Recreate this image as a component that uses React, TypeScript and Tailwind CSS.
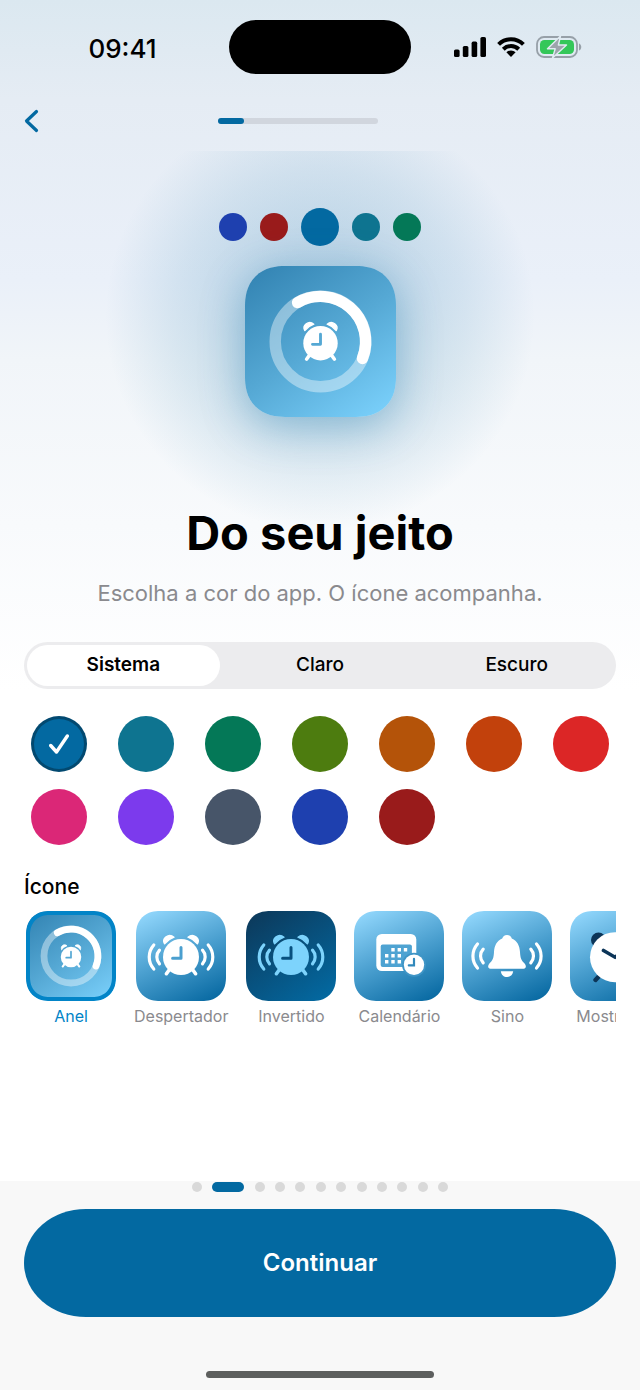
import { useState } from 'react'
import type { ReactNode } from 'react'

type IconName = 'Anel' | 'Despertador' | 'Invertido' | 'Calendário' | 'Sino' | 'Mostrador'

const modes = ['Sistema', 'Claro', 'Escuro']

const colors = [
  { name: 'Azul', bg: 'bg-[#0369a1]' },
  { name: 'Petróleo', bg: 'bg-[#0e7490]' },
  { name: 'Verde', bg: 'bg-[#047857]' },
  { name: 'Oliva', bg: 'bg-[#4d7c0f]' },
  { name: 'Âmbar', bg: 'bg-[#b45309]' },
  { name: 'Laranja', bg: 'bg-[#c2410c]' },
  { name: 'Vermelho', bg: 'bg-[#dc2626]' },
  { name: 'Rosa', bg: 'bg-[#db2777]' },
  { name: 'Violeta', bg: 'bg-[#7c3aed]' },
  { name: 'Ardósia', bg: 'bg-[#475569]' },
  { name: 'Anil', bg: 'bg-[#1e40af]' },
  { name: 'Bordô', bg: 'bg-[#991b1b]' },
]

const light = 'bg-[linear-gradient(155deg,#93d8fd_3%,#4a9fcf_50%,#0567a0_97%)]'

const tileBg: Record<IconName, string> = {
  Anel: 'bg-[linear-gradient(145deg,#3485b4_5%,#55a8d4_50%,#79cffa_95%)]',
  Despertador: light,
  Invertido: 'bg-[linear-gradient(145deg,#0c3a5c_5%,#0369a1_95%)]',
  Calendário: light,
  Sino: light,
  Mostrador: light,
}

const icons = Object.keys(tileBg) as IconName[]

function Alarm({ fill, hands }: { fill: string; hands: string }) {
  return (
    <g fill={fill} stroke={fill} strokeLinecap="round" strokeLinejoin="round">
      <circle r="18" stroke="none" />
      <path d="M-16.4-13.2C-19.6-18.4-12.4-24.4-7-19.8Q-12.6-17.8-16.4-13.2Z" strokeWidth="1.4" />
      <path d="M16.4-13.2C19.6-18.4 12.4-24.4 7-19.8Q12.6-17.8 16.4-13.2Z" strokeWidth="1.4" />
      <path d="M-11.5 12.5-14.6 16.7M11.5 12.5 14.6 16.7" strokeWidth="3.6" />
      <path d="M0-9.4V1.2H-8.4" fill="none" stroke={hands} strokeWidth="3" />
    </g>
  )
}

function Waves({ color, x }: { color: string; x: number }) {
  return (
    <g fill="none" stroke={color} strokeWidth="3.2" strokeLinecap="round">
      <path d={`M${-x - 5.7}-12A18 18 0 0 0 ${-x - 5.7} 12M${-x}-6.8A10 10 0 0 0 ${-x} 6.8`} />
      <path d={`M${x + 5.7}-12A18 18 0 0 1 ${x + 5.7} 12M${x}-6.8A10 10 0 0 1 ${x} 6.8`} />
    </g>
  )
}

const glyphs: Record<IconName, ReactNode> = {
  Anel: (
    <>
      <circle r="27" fill="none" stroke="#fff" strokeOpacity="0.4" strokeWidth="6.8" />
      <path d="M-13.7-23.2A27 27 0 0 1 25 10.1" fill="none" stroke="#fff" strokeWidth="6.8" strokeLinecap="round" />
      <g transform="translate(0 1) scale(0.57)">
        <Alarm fill="#fff" hands="#55a8d4" />
      </g>
    </>
  ),
  Despertador: (
    <g transform="translate(0 1)">
      <Alarm fill="#fff" hands="#4a9fcf" />
      <Waves color="#fff" x={21.5} />
    </g>
  ),
  Invertido: (
    <g transform="translate(0 1)">
      <Alarm fill="#7dd3fc" hands="#07507f" />
      <Waves color="#7dd3fc" x={21.5} />
    </g>
  ),
  Calendário: (
    <>
      <rect x="-22.7" y="-22" width="40" height="37" rx="5.5" fill="#fff" />
      <rect x="-18.3" y="-11.5" width="31.2" height="22.5" rx="2" fill="#4ea3d2" />
      <g fill="#fff">
        <path d="M-7.7-8h3.4v3.4h-3.4zM-1.4-8h3.4v3.4h-3.4zM4.8-8h3.4v3.4h-3.4z" />
        <path d="M-14-2h3.4v3.4h-3.4zM-7.7-2h3.4v3.4h-3.4zM-1.4-2h3.4v3.4h-3.4z" />
        <path d="M-14 4h3.4v3.4h-3.4zM-7.7 4h3.4v3.4h-3.4zM-1.4 4h3.4v3.4h-3.4z" />
      </g>
      <circle cx="15" cy="8.7" r="12" fill="#3f95c6" />
      <circle cx="15" cy="8.7" r="10.2" fill="#fff" />
      <path d="M15 2.8v6.6H9.8" fill="none" stroke="#3088bb" strokeWidth="2.2" strokeLinecap="round" />
    </>
  ),
  Sino: (
    <>
      <g fill="#fff">
        <path d="M0-21C2.6-21 4.2-19.4 4.8-17.4 10.4-15 12.6-10 13-4 13.3 2 14.2 4.2 17.6 7.6 19.6 9.8 19.2 12.7 16.6 12.7H-16.6C-19.2 12.7-19.6 9.8-17.6 7.6-14.2 4.2-13.3 2-13-4-12.6-10-10.4-15-4.8-17.4-4.2-19.4-2.6-21 0-21Z" />
        <path d="M-6.2 15.2H6.2C5.6 18.8 3.4 21 0 21S-5.6 18.8-6.2 15.2Z" />
      </g>
      <Waves color="#fff" x={23.8} />
    </>
  ),
  Mostrador: (
    <>
      <circle cx="-16.5" cy="-16" r="7.5" fill="#0c3558" />
      <circle cx="16.5" cy="-16" r="7.5" fill="#0c3558" />
      <path d="M-14 18-19.5 24M14 18 19.5 24" stroke="#0c3558" strokeWidth="4.4" strokeLinecap="round" />
      <circle cy="1.2" r="25" fill="#fff" />
      <path d="M-11.5-5.5 0 1.2 12-8" fill="none" stroke="#0c3558" strokeWidth="3.6" strokeLinecap="round" />
    </>
  ),
}

function Glyph({ name }: { name: IconName }) {
  return (
    <svg viewBox="-45 -45 90 90" className="block size-full" aria-hidden="true">
      {glyphs[name]}
    </svg>
  )
}

function StatusBar() {
  return (
    <div className="grid h-[91px] grid-cols-[1fr_182px_1fr] pt-5">
      <span className="flex h-14 items-center justify-center pl-4 text-[26px] font-medium">09:41</span>
      <span className="h-[54px] rounded-full bg-black" />
      <div className="flex h-[54px] items-center gap-[11px] pl-[43px]">
        <svg viewBox="0 0 32 20" className="h-5 w-8" aria-hidden="true">
          <rect x="0" y="12.5" width="5.6" height="7.5" rx="1.6" />
          <rect x="8.8" y="9" width="5.6" height="11" rx="1.6" />
          <rect x="17.6" y="4.6" width="5.6" height="15.4" rx="1.6" />
          <rect x="26.4" y="0" width="5.6" height="20" rx="1.6" />
        </svg>
        <svg viewBox="0 0 28 20" className="h-5 w-7" aria-hidden="true">
          <g fill="none" stroke="#000" strokeWidth="4">
            <path d="M1.6 7.4A17.6 17.6 0 0 1 26.4 7.4" />
            <path d="M6.3 12.2A11 11 0 0 1 21.7 12.2" />
          </g>
          <path d="M14 20 9.4 15.3A6.6 6.6 0 0 1 18.6 15.3Z" />
        </svg>
        <svg viewBox="0 0 46 22" className="h-[22px] w-[46px]" aria-hidden="true">
          <rect x="1" y="1" width="40" height="20" rx="7" fill="none" stroke="#97a0a8" strokeWidth="1.8" />
          <rect x="4" y="4" width="34" height="14" rx="4.4" fill="#34c759" />
          <path d="M43 7.5C46 8.5 46 13.5 43 14.5Z" fill="#97a0a8" />
          <path d="M24.5 0 11.5 12.8H19.2L16.5 22 30.5 9H22.4Z" fill="#9da4ab" stroke="#e1ebf3" strokeWidth="1.4" strokeLinejoin="round" />
        </svg>
      </div>
    </div>
  )
}

function NavBar() {
  return (
    <div className="grid h-[60px] grid-cols-[1fr_160px_1fr] items-center px-6">
      <button type="button" aria-label="Voltar" className="w-4 text-[#0369a1]">
        <svg viewBox="0 0 16 24" className="h-6 w-4" fill="none" stroke="currentColor" strokeWidth="3.2" strokeLinecap="round" strokeLinejoin="round">
          <path d="M12.5 2.5 2.5 12 12.5 21.5" />
        </svg>
      </button>
      <div className="-ml-[44px] h-[6px] w-40 justify-self-center rounded-full bg-[#d1d6de]">
        <div className="h-full w-[26px] rounded-full bg-[#0369a1]" />
      </div>
    </div>
  )
}

export default function App() {
  const [mode, setMode] = useState('Sistema')
  const [color, setColor] = useState('Azul')
  const [icon, setIcon] = useState<IconName>('Anel')

  return (
    <div className="flex min-h-screen flex-col bg-white bg-[linear-gradient(180deg,#dbe8f0_0px,#e5ecf4_100px,#eaf0f9_280px,#f1f5f9_360px,#ffffff_690px)] font-[Inter,'Liberation_Sans',sans-serif] text-black">
      <StatusBar />
      <NavBar />

      <main className="flex flex-1 flex-col">
        <section className="flex flex-col items-center bg-[radial-gradient(circle_215px_at_50%_165px,rgba(3,105,161,0.2)_30%,rgba(3,105,161,0.1)_68%,rgba(3,105,161,0)_100%)] pt-[57px] text-center">
          <div className="flex items-center gap-[13px]">
            <span className="size-7 rounded-full bg-[#1e40af]" />
            <span className="size-7 rounded-full bg-[#991b1b]" />
            <span className="size-[38px] rounded-full bg-[#0369a1]" />
            <span className="size-7 rounded-full bg-[#0e7490]" />
            <span className="size-7 rounded-full bg-[#047857]" />
          </div>
          <div className={`mt-5 size-[151px] rounded-[40px] [corner-shape:superellipse(1.2)] shadow-[0_10px_44px_rgba(3,105,161,0.36)] ${tileBg[icon]}`}>
            <Glyph name={icon} />
          </div>
          <h1 className="mt-[86px] text-[47px] leading-[60px] font-bold">Do seu jeito</h1>
          <p className="mt-[14px] text-[22px] leading-8 text-[#8a8a8e]">Escolha a cor do app. O ícone acompanha.</p>
        </section>

        <div className="mx-6 mt-[33px] grid grid-cols-3 gap-1 rounded-full bg-[#ececee] p-[3px]">
          {modes.map((m) => (
            <button
              key={m}
              type="button"
              aria-pressed={m === mode}
              onClick={() => setMode(m)}
              className={`h-[41px] rounded-full text-[19px] ${m === mode ? 'bg-white font-semibold' : 'font-medium'}`}
            >
              {m}
            </button>
          ))}
        </div>

        <div className="mx-6 mt-[27px] grid grid-cols-7 justify-items-center gap-x-[18px] gap-y-[17px]">
          {colors.map((c) => (
            <button
              key={c.name}
              type="button"
              aria-label={c.name}
              aria-pressed={c.name === color}
              onClick={() => setColor(c.name)}
              className={`flex size-14 items-center justify-center rounded-full ${c.bg} ${c.name === color ? 'border-[3px] border-black/30' : ''}`}
            >
              {c.name === color && (
                <svg viewBox="0 0 20 20" className="size-5" fill="none" stroke="#fff" strokeWidth="3.4" strokeLinecap="round" strokeLinejoin="round">
                  <path d="M1.7 11.5 7.5 18 18.3 2" />
                </svg>
              )}
            </button>
          ))}
        </div>

        <h2 className="mx-6 mt-7 text-[21px] leading-7 font-medium">Ícone</h2>
        <div className="mx-6 mt-[10px] flex gap-[14px] overflow-x-auto [scrollbar-width:none]">
          {icons.map((name) => (
            <button
              key={name}
              type="button"
              aria-pressed={name === icon}
              onClick={() => setIcon(name)}
              className="flex min-w-[94px] shrink-0 flex-col items-center gap-[5px] px-[2px]"
            >
              <span className={`relative size-[90px] overflow-hidden rounded-[24px] [corner-shape:superellipse(1.2)] ${tileBg[name]}`}>
                <Glyph name={name} />
                {name === icon && (
                  <span className="absolute inset-0 rounded-[24px] border-4 border-[#0284c7] [corner-shape:superellipse(1.2)]" />
                )}
              </span>
              <span className={`text-[16px] leading-5 ${name === icon ? 'text-[#0284c7]' : 'text-[#8a8a8e]'}`}>{name}</span>
            </button>
          ))}
        </div>
      </main>

      <footer className="flex flex-col items-center bg-[#f8f8f8] px-6 pb-3">
        <div className="flex h-[11px] w-64 items-center justify-between">
          {Array.from({ length: 12 }, (_, i) => (
            <span key={i} className={`h-[10px] rounded-full ${i === 1 ? 'w-8 bg-[#0369a1]' : 'w-[10px] bg-[#d9d9d9]'}`} />
          ))}
        </div>
        <button type="button" className="mt-[17px] h-[108px] w-full rounded-[62px/54px] bg-[#0369a1] text-[24px] font-semibold text-white">
          Continuar
        </button>
        <span className="mt-[54px] h-[7px] w-[228px] rounded-full bg-[#5d5f5e]" />
      </footer>
    </div>
  )
}
